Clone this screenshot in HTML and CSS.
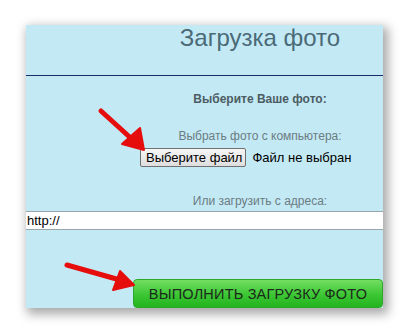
FILE: index.html
```html
<!DOCTYPE html>
<html lang="ru">
<head>
    <meta charset="UTF-8">
    <meta name="viewport" content="width=device-width, initial-scale=1.0">
    <title>Загрузка фото</title>
    <link rel="stylesheet" href="styles.css">
</head>
<body>

    <div class="panel">
        <h1 class="title">Загрузка фото</h1>
        <hr class="divider">

        <p class="label label-bold">Выберите Ваше фото:</p>
        <p class="label">Выбрать фото с компьютера:</p>

        <!-- File picker -->
        <div class="file-row">
            <button class="btn-file">Выберите файл</button>
            <span class="file-name">Файл не выбран</span>
        </div>

        <p class="label label-url">Или загрузить с адреса:</p>
        <input type="text" class="url-input" value="http://">

        <div class="submit-row">
            <button class="btn-submit">ВЫПОЛНИТЬ ЗАГРУЗКУ ФОТО</button>
        </div>
    </div>

    <!-- Red pointer arrows drawn over the form -->
    <svg class="arrows" width="409" height="335" viewBox="0 0 409 335">
        <g fill="#e60d0d" stroke="#e60d0d" stroke-linejoin="round">
            <line x1="101" y1="111" x2="134" y2="141" stroke-width="5" stroke-linecap="round"/>
            <polygon points="144,150 122,144 140,128" stroke-width="2"/>
            <line x1="67" y1="265" x2="120" y2="280" stroke-width="5" stroke-linecap="round"/>
            <polygon points="134,285 113,290 120,271" stroke-width="2"/>
        </g>
    </svg>

</body>
</html>
```

FILE: styles.css
```css
/* General Styling */
* {
    box-sizing: border-box;
    margin: 0;
    padding: 0;
}

body {
    font-family: "Liberation Sans", Arial, sans-serif;
    background: #fff;
    padding: 25px 26px;
    width: 409px;
    height: 335px;
    overflow: hidden;
    position: relative;
}

/* Light blue form panel */
.panel {
    width: 357px;
    height: 283px;
    background: #c3e9f5;
    box-shadow: 3px 4px 10px 2px rgba(0, 0, 0, 0.35);
    display: flex;
    flex-direction: column;
}

.title {
    font-size: 24px;
    line-height: 23px;
    font-weight: normal;
    color: #4b6a77;
    text-align: center;
    padding-left: 111px;
    margin-top: 1px;
}

.divider {
    border: none;
    border-top: 1px solid #1a2c66;
    margin-top: 26px;
}

/* Small captions */
.label {
    font-size: 12px;
    line-height: 14px;
    color: #6b7c82;
    text-align: center;
    padding-left: 111px;
}

.label-bold {
    font-weight: bold;
    color: #4c5c62;
    margin-top: 16px;
    margin-bottom: 23px;
}

/* File picker row */
.file-row {
    display: flex;
    align-items: center;
    gap: 6px;
    padding-left: 114px;
    margin-top: 5px;
}

.btn-file {
    height: 19px;
    padding: 0 3px 0 5px;
    font-family: inherit;
    font-size: 13px;
    color: #000;
    background: linear-gradient(#f6f6f6, #dedede);
    border: 1px solid #707070;
    border-radius: 2px;
}

.file-name {
    font-size: 13px;
    color: #000;
}

.label-url {
    margin-top: 27px;
}

/* Address field */
.url-input {
    width: 100%;
    height: 19px;
    margin-top: 3px;
    padding: 0 1px;
    font-family: inherit;
    font-size: 13px;
    color: #000;
    background: #fff;
    border: none;
    border-top: 1px solid #9aa6aa;
    border-bottom: 1px solid #9aa6aa;
    outline: none;
}

/* Green submit button */
.submit-row {
    margin-top: auto;
    padding-left: 107px;
}

.btn-submit {
    width: 100%;
    height: 29px;
    font-family: inherit;
    font-size: 14.5px;
    letter-spacing: 0.2px;
    color: #1b2a1b;
    background: linear-gradient(#72de62, #3cc634 55%, #22b41e);
    border: 1px solid #2fa82a;
    border-radius: 4px;
    cursor: pointer;
}

.arrows {
    position: absolute;
    left: 0;
    top: 0;
    pointer-events: none;
}
```
